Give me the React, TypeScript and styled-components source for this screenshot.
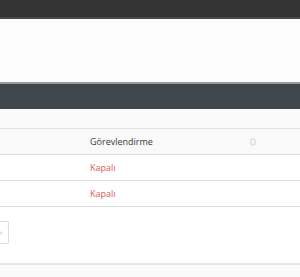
import styled, { createGlobalStyle } from 'styled-components'

const GlobalStyle = createGlobalStyle`
  html, body {
    margin: 0;
    padding: 0;
    background: #fff;
    font-family: "Open Sans", "Noto Sans", "Liberation Sans", sans-serif;
  }
`

const Page = styled.div`
  display: flex;
  flex-direction: column;
  width: 300px;
  height: 277px;
  overflow: hidden;
`

const TopBar = styled.div`
  height: 17px;
  background: #333333;
  border-bottom: 2px solid #4a4a4a;
`

const Banner = styled.div`
  height: 63px;
  background: #fcfcfc;
  border-bottom: 2px solid #9a9a9a;
`

const SubNav = styled.div`
  height: 25px;
  background: #3f464c;
`

const Content = styled.div`
  display: flex;
  flex-direction: column;
  background: #fff;
  flex: 1;
`

const Spacer = styled.div`
  height: 19px;
  background: #fafafa;
  border-bottom: 1px solid #e2e2e2;
`

const Table = styled.div`
  display: flex;
  flex-direction: column;
`

const Row = styled.div<{ $head?: boolean }>`
  display: grid;
  grid-template-columns: 90px 1fr;
  height: 25px;
  align-items: center;
  background: ${p => (p.$head ? '#f9f9f9' : '#fff')};
  border-bottom: 1px solid #dedede;
  font-size: 9px;
  font-weight: ${p => (p.$head ? 500 : 400)};
  color: #3a3a3a;
`

const Cell = styled.div`
  display: flex;
  align-items: center;
  justify-content: space-between;
  padding-right: 44px;
`

const Status = styled.span`
  color: #dc5a5a;
`

const SortIcon = styled.svg`
  width: 6px;
  height: 8px;
`

const Pager = styled.div`
  height: 56px;
  display: flex;
  align-items: center;
  border-bottom: 2px solid #e6e6e6;
`

const PageBox = styled.div`
  width: 8px;
  height: 21px;
  margin-top: -6px;
  border: 1px solid #dddddd;
  border-left: none;
  border-radius: 0 2px 2px 0;
  font-size: 7px;
  color: #999;
  display: flex;
  align-items: center;
`

const Footer = styled.div`
  flex: 1;
  background: #fafafa;
`

const App = () => {
  return (
    <Page>
      <GlobalStyle />
      <TopBar />
      <Banner />
      <SubNav />
      <Content>
        <Spacer />
        <Table>
          <Row $head>
            <div />
            <Cell>
              <span>Görevlendirme</span>
              <SortIcon viewBox="0 0 6 8">
                <rect x="1" y="1" width="4" height="6" rx="1" fill="none" stroke="#c8c8c8" strokeWidth="0.8" />
              </SortIcon>
            </Cell>
          </Row>
          <Row>
            <div />
            <Cell>
              <Status>Kapalı</Status>
            </Cell>
          </Row>
          <Row>
            <div />
            <Cell>
              <Status>Kapalı</Status>
            </Cell>
          </Row>
        </Table>
        <Pager>
          <PageBox>›</PageBox>
        </Pager>
        <Footer />
      </Content>
    </Page>
  )
}

export default App
